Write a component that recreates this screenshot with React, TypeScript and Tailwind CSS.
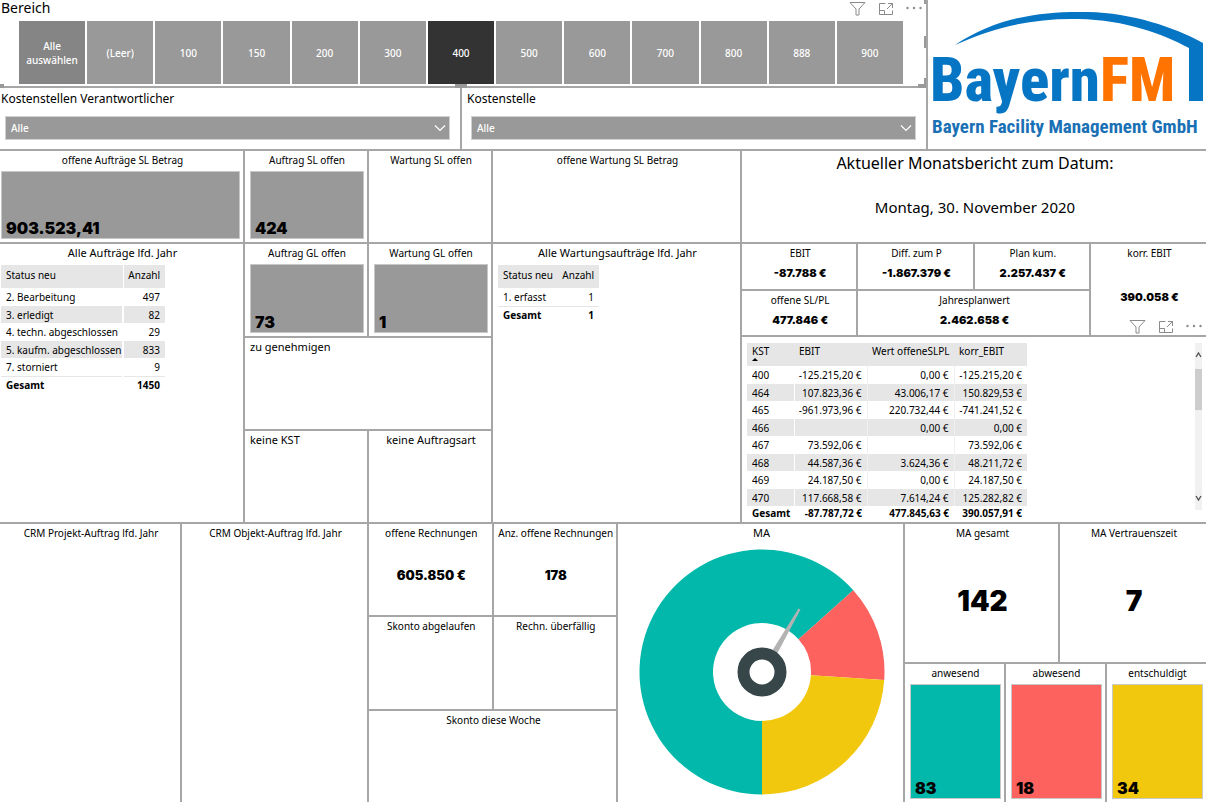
import { useState } from 'react';
import type { ReactNode } from 'react';
import clsx from 'clsx';

const areas = ['Alle auswählen', '(Leer)', '100', '150', '200', '300', '400', '500', '600', '700', '800', '888', '900'];

const orders = [
  ['2. Bearbeitung', '497'],
  ['3. erledigt', '82'],
  ['4. techn. abgeschlossen', '29'],
  ['5. kaufm. abgeschlossen', '833'],
  ['7. storniert', '9'],
];

const costCentres = [
  ['400', '-125.215,20 €', '0,00 €', '-125.215,20 €'],
  ['464', '107.823,36 €', '43.006,17 €', '150.829,53 €'],
  ['465', '-961.973,96 €', '220.732,44 €', '-741.241,52 €'],
  ['466', '', '0,00 €', '0,00 €'],
  ['467', '73.592,06 €', '', '73.592,06 €'],
  ['468', '44.587,36 €', '3.624,36 €', '48.211,72 €'],
  ['469', '24.187,50 €', '0,00 €', '24.187,50 €'],
  ['470', '117.668,58 €', '7.614,24 €', '125.282,82 €'],
];

const staff = [
  { value: 90, color: '#01b8aa' },
  { value: 18, color: '#fd625e' },
  { value: 34, color: '#f2c80f' },
];

type CardProps = {
  title: string;
  large?: boolean;
  left?: boolean;
  children?: ReactNode;
};

function Card({ title, large, left, children }: CardProps) {
  return (
    <section className="relative flex min-w-0 flex-col bg-white">
      <h2
        className={clsx(
          'h-5 shrink-0 whitespace-nowrap leading-[18px]',
          large ? 'text-[11px]' : 'text-[10px]',
          left ? 'pl-[5px]' : 'pl-0.5 text-center',
        )}
      >
        {title}
      </h2>
      {children}
    </section>
  );
}

// Filled tile with the number in the lower left corner
function Tile({ value, className }: { value: string; className: string }) {
  return (
    <div className={clsx('flex flex-1 items-end border border-[#c8c8c8] pl-1', className)}>
      <span className="font-[Inter] text-[16px] font-black leading-5">{value}</span>
    </div>
  );
}

function Figure({ value, className }: { value: string; className: string }) {
  return (
    <p className={clsx('pl-0.5 text-center font-[Inter] font-black', className)}>{value}</p>
  );
}

function VisualActions() {
  return (
    <div className="flex items-center gap-3 text-[#8a8a8a]">
      <button type="button" aria-label="Filter" className="h-4 w-[17px]">
        <svg viewBox="0 0 17 16" className="h-4 w-[17px]" fill="none" stroke="currentColor">
          <path d="M1 2.500h15l-6 6.500v6h-3V9z" />
        </svg>
      </button>
      <button type="button" aria-label="Fokusmodus" className="h-4 w-4">
        <svg viewBox="0 0 16 16" className="h-4 w-4" fill="none" stroke="currentColor">
          <path d="M7.500 3.500h-6v11h13v-4M10 3.500h4.500V8M14.500 3.500L9 9M1.500 10.500h5v4" />
        </svg>
      </button>
      <button type="button" aria-label="Weitere Optionen" className="h-4 w-4">
        <svg viewBox="0 0 16 16" className="h-4 w-4" fill="currentColor">
          <circle cx="1.500" cy="8" r="1.200" />
          <circle cx="8" cy="8" r="1.200" />
          <circle cx="14.500" cy="8" r="1.200" />
        </svg>
      </button>
    </div>
  );
}

function AreaSlicer() {
  const [selected, setSelected] = useState('400');
  return (
    <section className="relative h-[86px] bg-white">
      <div className="flex h-[21px] items-start justify-between pr-1">
        <h2 className="pl-[1px] text-[14px] leading-4">Bereich</h2>
        <VisualActions />
      </div>
      <div className="grid h-[63px] grid-cols-13 gap-0.5 pl-[19px] pr-[23px]">
        {areas.map((area) => (
          <button
            key={area}
            type="button"
            aria-pressed={selected === area}
            onClick={() => setSelected(area)}
            className={clsx(
              'px-1 text-[10px] font-medium leading-[14px] text-white',
              selected === area ? 'bg-[#333333]' : area === areas[0] ? 'bg-[#858585]' : 'bg-[#999999]',
            )}
          >
            {area}
          </button>
        ))}
      </div>
      {/* resize handles */}
      <span className="absolute -bottom-0.5 left-0 h-1 w-1 bg-[#999999]" />
      <span className="absolute -bottom-0.5 left-[455px] h-1 w-3 bg-[#999999]" />
      <span className="absolute -bottom-0.5 right-0 h-1 w-2 bg-[#999999]" />
      <span className="absolute bottom-0 right-0 h-2 w-0.5 bg-[#999999]" />
      <span className="absolute right-0 top-9 h-3 w-0.5 bg-[#999999]" />
      <span className="absolute right-0 top-0 h-1 w-0.5 bg-[#999999]" />
    </section>
  );
}

function Dropdown({ id, label, className }: { id: string; label: string; className: string }) {
  return (
    <div className={clsx('bg-white', className)}>
      <label htmlFor={id} className="block h-7 text-[12px] leading-[22px]">
        {label}
      </label>
      <div className="relative ml-[4px]">
        <select
          id={id}
          className="block h-6 w-full appearance-none border border-[#d0d0d0] bg-[#999999] px-[5px] text-[10px] font-medium text-white"
        >
          <option>Alle</option>
        </select>
        <svg viewBox="0 0 12 8" className="pointer-events-none absolute right-1 top-2 h-2 w-3" fill="none" stroke="white" strokeWidth="1.200">
          <path d="M1 1.500l5 5 5-5" />
        </svg>
      </div>
    </div>
  );
}

function Logo() {
  return (
    <svg
      viewBox="0 0 278 149"
      role="img"
      aria-label="BayernFM"
      className="h-[149px] w-full font-['Roboto_Condensed',Roboto,sans-serif]"
    >
      <path
        d="M27 45C70 16 117 11 160 12C204 13 246 27 275 43V101H261V48C235 34 198 20 150 19C106 18 66 27 27 45Z"
        fill="#0675c4"
      />
      <text x="2" y="101" fontSize="61" fontWeight="800" fill="#0675c4">
        Bayern<tspan fill="#ff7300">FM</tspan>
      </text>
      <text x="4" y="133" fontSize="19" fontWeight="700" fill="#1a70b5">
        Bayern Facility Management GmbH
      </text>
    </svg>
  );
}

function OrdersTable() {
  return (
    <table className="ml-[1px] mt-[1px] w-[164px] table-fixed border-collapse text-[10px] leading-[12px]">
      <colgroup>
        <col className="w-[122px]" />
        <col className="w-[42px]" />
      </colgroup>
      <thead>
        <tr className="h-[23px] bg-[#e6e6e6]">
          <th className="border-r border-white pb-1 pl-[5px] text-left font-normal">Status neu</th>
          <th className="pb-1 pr-[5px] text-right font-normal">Anzahl</th>
        </tr>
      </thead>
      <tbody>
        {orders.map(([status, count]) => (
          <tr key={status} className="h-[17px] odd:h-[18px] even:bg-[#e6e6e6]">
            <td className="whitespace-nowrap border-r-2 border-white p-0 pl-[5px]">{status}</td>
            <td className="p-0 pr-[5px] text-right">{count}</td>
          </tr>
        ))}
      </tbody>
      <tfoot>
        <tr className="h-[18px] border-t border-[#e6e6e6] font-bold">
          <td className="p-0 pl-[5px]">Gesamt</td>
          <td className="p-0 pr-[5px] text-right">1450</td>
        </tr>
      </tfoot>
    </table>
  );
}

function MaintenanceTable() {
  return (
    <table className="ml-[5px] mt-[1px] w-[101px] border-collapse text-[10px] leading-[12px]">
      <thead>
        <tr className="h-[23px] bg-[#e6e6e6]">
          <th className="pb-1 pl-[5px] text-left font-normal">Status neu</th>
          <th className="pb-1 pr-[5px] text-right font-normal">Anzahl</th>
        </tr>
      </thead>
      <tbody>
        <tr className="h-[18px]">
          <td className="p-0 pl-[5px]">1. erfasst</td>
          <td className="p-0 pr-[5px] text-right">1</td>
        </tr>
      </tbody>
      <tfoot>
        <tr className="h-[18px] border-t border-[#e6e6e6] font-bold">
          <td className="p-0 pl-[5px]">Gesamt</td>
          <td className="p-0 pr-[5px] text-right">1</td>
        </tr>
      </tfoot>
    </table>
  );
}

function CostCentreTable() {
  return (
    <div className="flex justify-between bg-white pl-[5px] pr-1 pt-1.5">
      <table className="w-[280px] table-fixed border-collapse self-start whitespace-nowrap text-[10px] leading-[12px]">
        <colgroup>
          <col className="w-[47px]" />
          <col className="w-[73px]" />
          <col className="w-[87px]" />
          <col className="w-[73px]" />
        </colgroup>
        <thead>
          <tr className="h-[23px] bg-[#e6e6e6] align-top">
            <th className="p-0 pl-[5px] pt-0.5 text-left font-normal">
              KST
              <svg viewBox="0 0 6 3" className="mt-[1px] block h-[3px] w-1.5">
                <path d="M0 3l3-3 3 3z" />
              </svg>
            </th>
            <th className="p-0 pl-[5px] pt-0.5 text-left font-normal">EBIT</th>
            <th className="p-0 pl-[5px] pt-0.5 text-left font-normal">Wert offeneSLPL</th>
            <th className="p-0 pl-[5px] pt-0.5 text-left font-normal">korr_EBIT</th>
          </tr>
        </thead>
        <tbody>
          {costCentres.map(([kst, ebit, open, corrected]) => (
            <tr key={kst} className="h-[17px] odd:h-[18px] even:bg-[#e6e6e6]">
              <td className="border-r border-white p-0 pl-[5px]">{kst}</td>
              <td className="border-r border-[#f0f0f0] p-0 pr-[5px] text-right">{ebit}</td>
              <td className="border-r border-[#f0f0f0] p-0 pr-[5px] text-right">{open}</td>
              <td className="p-0 pr-[5px] text-right">{corrected}</td>
            </tr>
          ))}
        </tbody>
        <tfoot>
          <tr className="h-3.5 font-bold">
            <td className="p-0 pl-[5px]">Gesamt</td>
            <td className="p-0 pr-[5px] text-right">-87.787,72 €</td>
            <td className="p-0 pr-[5px] text-right">477.845,63 €</td>
            <td className="p-0 pr-[5px] text-right">390.057,91 €</td>
          </tr>
        </tfoot>
      </table>
      <div className="mb-3 flex w-[7px] flex-col justify-between bg-[#f1f1f1] py-2 text-[#505050]">
        <div>
          <svg viewBox="0 0 7 8" className="h-2 w-[7px]" fill="none" stroke="currentColor" strokeWidth="1.300">
            <path d="M1 6l2.500-4L6 6" />
          </svg>
          <div className="mt-2.5 h-[41px] bg-[#cdcdcd]" />
        </div>
        <svg viewBox="0 0 7 8" className="h-2 w-[7px]" fill="none" stroke="currentColor" strokeWidth="1.300">
          <path d="M1 2l2.500 4L6 2" />
        </svg>
      </div>
    </div>
  );
}

// Point on a circle around the gauge centre, 0° at the bottom, clockwise
function point(radius: number, degrees: number) {
  const angle = ((degrees + 90) * Math.PI) / 180;
  return `${123 + radius * Math.cos(angle)} ${123 + radius * Math.sin(angle)}`;
}

function StaffGauge() {
  const total = staff.reduce((sum, part) => sum + part.value, 0);
  let end = 0;
  return (
    <div className="flex justify-center pl-0.5 pt-[5px]">
      <svg viewBox="0 0 246 246" role="img" aria-label="MA" className="h-[246px] w-[246px]">
        {staff.map(({ value, color }) => {
          const start = end;
          end = start + (value / total) * 360;
          const big = end - start > 180 ? 1 : 0;
          return (
            <path
              key={color}
              fill={color}
              d={`M${point(122.5, start)}A122.5 122.5 0 ${big} 1 ${point(122.5, end)}L${point(49, end)}A49 49 0 ${big} 0 ${point(49, start)}Z`}
            />
          );
        })}
        <path d="M133 102L159.500 59.500L161.500 60.500L138 105Z" fill="#b3b3b3" />
        <circle cx="123" cy="123" r="18.500" fill="none" stroke="#374649" strokeWidth="12" />
      </svg>
    </div>
  );
}

export default function App() {
  return (
    <main className="flex min-h-screen flex-col gap-0.5 bg-[#a6a6a6] font-['Noto_Sans','Open_Sans',sans-serif] text-black">
      <header className="grid grid-cols-[926fr_278fr] gap-0.5">
        <div className="flex min-w-0 flex-col gap-0.5">
          <AreaSlicer />
          <div className="grid flex-1 grid-cols-[460fr_464fr] gap-0.5">
            <Dropdown id="verantwortlicher" label="Kostenstellen Verantwortlicher" className="pl-[1px] pr-2.5" />
            <Dropdown id="kostenstelle" label="Kostenstelle" className="pl-[5px] pr-2.5" />
          </div>
        </div>
        <div className="bg-white">
          <Logo />
        </div>
      </header>

      <div className="grid min-h-[91px] grid-cols-[243fr_122fr_122fr_247fr_464fr] gap-0.5">
        <Card title="offene Aufträge SL Betrag">
          <div className="flex flex-1 pb-[3px] pl-[1px] pr-[3px]">
            <Tile value="903.523,41" className="bg-[#999999]" />
          </div>
        </Card>
        <Card title="Auftrag SL offen">
          <div className="flex flex-1 pb-[3px] pl-[5px] pr-[3px]">
            <Tile value="424" className="bg-[#999999]" />
          </div>
        </Card>
        <Card title="Wartung SL offen" />
        <Card title="offene Wartung SL Betrag" />
        <section className="flex flex-col gap-5 bg-white pl-0.5 text-center">
          <h1 className="text-[16px] leading-6">Aktueller Monatsbericht zum Datum:</h1>
          <p className="text-[15px] leading-6">Montag, 30. November 2020</p>
        </section>
      </div>

      <div className="grid min-h-[278px] grid-cols-[243fr_246fr_247fr_464fr] gap-0.5">
        <Card title="Alle Aufträge lfd. Jahr" large>
          <OrdersTable />
        </Card>
        <div className="grid grid-cols-2 grid-rows-[92fr_91fr_91fr] gap-0.5">
          <Card title="Auftrag GL offen">
            <div className="flex flex-1 pb-[3px] pl-[5px] pr-[3px]">
              <Tile value="73" className="bg-[#999999]" />
            </div>
          </Card>
          <Card title="Wartung GL offen">
            <div className="flex flex-1 pb-[3px] pl-[5px] pr-[3px]">
              <Tile value="1" className="bg-[#999999]" />
            </div>
          </Card>
          <div className="col-span-2 grid">
            <Card title="zu genehmigen" large left />
          </div>
          <Card title="keine KST" large left />
          <Card title="keine Auftragsart" large />
        </div>
        <Card title="Alle Wartungsaufträge lfd. Jahr" large>
          <MaintenanceTable />
        </Card>
        <div className="grid grid-rows-[91px_1fr] gap-0.5">
          <div className="grid grid-cols-[347fr_115fr] gap-0.5">
            <div className="grid grid-rows-2 gap-0.5">
              <div className="grid grid-cols-3 gap-0.5">
                <Card title="EBIT">
                  <Figure value="-87.788 €" className="text-[11px] leading-[18px]" />
                </Card>
                <Card title="Diff. zum P">
                  <Figure value="-1.867.379 €" className="text-[11px] leading-[18px]" />
                </Card>
                <Card title="Plan kum.">
                  <Figure value="2.257.437 €" className="text-[11px] leading-[18px]" />
                </Card>
              </div>
              <div className="grid grid-cols-[115fr_232fr] gap-0.5">
                <Card title="offene SL/PL">
                  <Figure value="477.846 €" className="text-[11px] leading-[18px]" />
                </Card>
                <Card title="Jahresplanwert">
                  <Figure value="2.462.658 €" className="text-[11px] leading-[18px]" />
                </Card>
              </div>
            </div>
            <Card title="korr. EBIT">
              <Figure value="390.058 €" className="pt-6 text-[11px] leading-[18px]" />
              <div className="absolute bottom-[1px] right-1">
                <VisualActions />
              </div>
            </Card>
          </div>
          <CostCentreTable />
        </div>
      </div>

      <div className="grid min-h-[278px] flex-1 grid-cols-[180fr_185fr_247fr_285fr_301fr] gap-0.5">
        <Card title="CRM Projekt-Auftrag lfd. Jahr" />
        <Card title="CRM Objekt-Auftrag lfd. Jahr" />
        <div className="grid grid-cols-2 grid-rows-3 gap-0.5">
          <Card title="offene Rechnungen">
            <Figure value="605.850 €" className="pt-5 text-[13px] leading-[22px]" />
          </Card>
          <Card title="Anz. offene Rechnungen">
            <Figure value="178" className="pt-5 text-[13px] leading-[22px]" />
          </Card>
          <Card title="Skonto abgelaufen" />
          <Card title="Rechn. überfällig" />
          <div className="col-span-2 grid">
            <Card title="Skonto diese Woche" />
          </div>
        </div>
        <Card title="MA" large>
          <StaffGauge />
        </Card>
        <div className="grid grid-rows-2 gap-0.5">
          <div className="grid grid-cols-[153fr_146fr] gap-0.5">
            <Card title="MA gesamt">
              <Figure value="142" className="pt-10 text-[28px] leading-[34px]" />
            </Card>
            <Card title="MA Vertrauenszeit">
              <Figure value="7" className="pt-10 text-[28px] leading-[34px]" />
            </Card>
          </div>
          <div className="grid grid-cols-3 gap-0.5">
            <Card title="anwesend">
              <div className="flex flex-1 pb-[3px] pl-[5px] pr-[3px]">
                <Tile value="83" className="bg-[#01b8aa]" />
              </div>
            </Card>
            <Card title="abwesend">
              <div className="flex flex-1 pb-[3px] pl-[5px] pr-[3px]">
                <Tile value="18" className="bg-[#fd625e]" />
              </div>
            </Card>
            <Card title="entschuldigt">
              <div className="flex flex-1 pb-[3px] pl-[5px] pr-[3px]">
                <Tile value="34" className="bg-[#f2c80f]" />
              </div>
            </Card>
          </div>
        </div>
      </div>
    </main>
  );
}
